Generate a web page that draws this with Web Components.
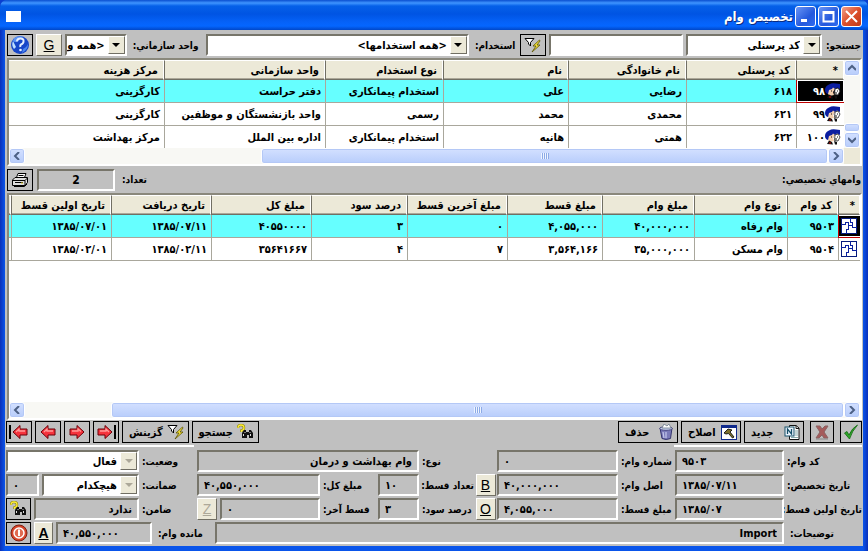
<!DOCTYPE html>
<html lang="fa" dir="rtl">
<head>
<meta charset="utf-8">
<title>تخصیص وام</title>
<style>
  body { margin: 0; background: #0a3fd0; font: bold 11px "DejaVu Sans Condensed", "DejaVu Sans", sans-serif; color: #000; }
  loan-app { min-height: 100vh; }
</style>
</head>
<body>
<loan-app></loan-app>

<script>
const define = (name, html, setup) => {
  const template = document.createElement('template');
  template.innerHTML = '<style>*{box-sizing:border-box}:host{box-sizing:border-box}</style>' + html;
  customElements.define(name, class extends HTMLElement {
    constructor() {
      super();
      this.attachShadow({ mode: 'open' }).append(template.content.cloneNode(true));
    }
    connectedCallback() {
      if (setup && !this.ready) { this.ready = true; setup(this, this.shadowRoot); }
    }
  });
};

const ARROW = 'M1 8 8 1.5V5H15V11H8V14.5Z';
const ICONS = {
  help: [20, 20, `<circle cx="10" cy="10" r="9" fill="#1746c8"/><path d="M4 3Q9 0 14 2Q9 3 8 6Q5 8 3 6Z" fill="#5b94f4"/><path d="M3 6Q1 10 4 14L6 12Z" fill="#bfe0ff"/><path d="M13 14Q17 12 18 9Q18 15 12 18Z" fill="#4a86f0"/><path d="M7 6.500Q7 3.500 10.500 3.500T13.500 6.500Q13.500 8.500 11 9.500Q10 10 10.300 12" fill="none" stroke="#e4efff" stroke-width="2"/><circle cx="10.500" cy="15" r="1.300" fill="#e4efff"/>`],
  filter: [18, 16, `<path d="M1 1.500H10L6.500 5.500V9L4.500 7V5.500Z" fill="#fff" stroke="#000"/><path d="M15.500 3 9 9h3l-4 6 8-7h-3l3-4z" fill="#f6e33a" stroke="#5a5200" stroke-width=".8"/>`],
  print: [18, 16, `<path d="M5.500 5.500 7 1.500H15L13.500 5.500" fill="#fff" stroke="#000"/><path d="M7.500 3.500H12.500" stroke="#000"/><path d="M1.500 8 4 5.500H16.500V10.500L14 13.500H1.500Z" fill="#ddd" stroke="#000"/><path d="M1.500 8.500H14V13M14 8.500 16.500 6M3 14.500H13.500L16 12M4 10.500H12" fill="none" stroke="#000"/><path d="M10 11h2" stroke="#e2cc20"/>`],
  people: [16, 16, `<path d="M0 7Q0 3 4 1.500Q7-.5 11 .5L15 1V6L12 4.500 9 7 7 11H3Q0 10 0 7Z" fill="#0b1da0"/><path d="M4 7 7 6 8 4.500 10 6 8 9 9 12 5 13 3 11Z" fill="#f3cfae"/><path d="M10 6 13 5 15 8 13 12 9.500 11.500Z" fill="#fff" stroke="#222" stroke-width=".8"/><path d="M2 15 4 11.500 7 13 8 15.500ZM9 12 12 13V15.500H10Z" fill="#111"/><path d="M6 8h1M12 8h1M10 10h2" stroke="#111"/><path d="M4 14h2" stroke="#c00"/>`],
  piece: [16, 16, `<g shape-rendering="crispEdges"><rect x="0" y="0" width="16" height="16" fill="#061a7c"/><rect x="1" y="1" width="14" height="14" fill="#fff"/><path d="M0 6.500H4.500V4.500H7.500V7.500H11.500V9.500H16M9.500 0V4.500H11.500V7.500M7.500 7.500V11.500H5.500V16M4.500 11.500H7.500" fill="none" stroke="#0a20a0" stroke-width="1"/></g>`],
  prev: [16, 16, `<path d="${ARROW}" fill="#f5333c" stroke="#6b0008"/><path d="M4 8 7 5V7H13" fill="none" stroke="#ff9a98" stroke-width="1.300"/>`],
  next: [16, 16, `<g transform="matrix(-1 0 0 1 16 0)"><path d="${ARROW}" fill="#f5333c" stroke="#6b0008"/><path d="M4 7.500 7 5V7H13" fill="none" stroke="#ff9a98" stroke-width="1.300"/></g>`],
  first: [20, 16, `<path d="M1 1V15" stroke="#000" stroke-width="2"/><g transform="translate(3 0)"><path d="${ARROW}" fill="#f5333c" stroke="#6b0008"/><path d="M4 8 7 5V7H13" fill="none" stroke="#ff9a98" stroke-width="1.300"/></g>`],
  last: [20, 16, `<path d="M19 1V15" stroke="#000" stroke-width="2"/><g transform="matrix(-1 0 0 1 17 0)"><path d="${ARROW}" fill="#f5333c" stroke="#6b0008"/><path d="M4 8 7 5V7H13" fill="none" stroke="#ff9a98" stroke-width="1.300"/></g>`],
  find: [18, 16, `<path d="M1 4Q1 1 4 1T7 4Q7 6 4.500 6.500V8" fill="none" stroke="#8a8200" stroke-width="2.400"/><path d="M1 4Q1 1 4 1T7 4Q7 6 4.500 6.500V8" fill="none" stroke="#ffee3a" stroke-width="1.300"/><path d="M5 14V9L7 6H9V8H12V6H14L16 9V14H12V11H10V14Z" fill="#111"/><path d="M6.500 12V10M13.500 12V10M8 8v1M13 8v1" stroke="#ddd"/>`],
  trash: [16, 16, `<path d="M2 4H14L12.500 14.500Q8 16.500 4 14.500Z" fill="#7a7ab8" stroke="#34346e"/><ellipse cx="8" cy="4.500" rx="6.300" ry="1.800" fill="#c6d0ea" stroke="#34346e" stroke-width=".8"/><path d="M4 4 6 0 9 2 11 0 13 4Z" fill="#fff" stroke="#6b7a8c" stroke-width=".8"/><path d="M5 8 6 14M8 8V14" stroke="#c4c8ec" stroke-width="1.200"/>`],
  edit: [16, 15, `<rect x=".5" y=".5" width="15" height="14" fill="#fff" stroke="#102a8c"/><path d="M1 1H15V3H1Z" fill="#102a8c"/><path d="M3 8 7 4 11 5 9 7 13 12 11.500 13 7.500 8.500 5 9Z" fill="#7c6f2a" stroke="#111" stroke-width=".9"/>`],
  fresh: [16, 16, `<path d="M5.500 1.500H12L15 4V15.500H5.500Z" fill="#fff" stroke="#111"/><path d="M12 1.500V4.500H15" fill="none" stroke="#111"/><rect x="1" y="3" width="9" height="9" fill="#eef6ff" stroke="#165069"/><path d="M3.500 10V5L7.500 10V5" fill="none" stroke="#165069" stroke-width="1.300"/><path d="M11 7h3M11 9h3M11 11h3M7 13.500h7" stroke="#8aa"/>`],
  cross: [16, 16, `<path d="M2 2H6L8 5 11 2H14L10 8 14 14H10L8 11 5 14H2L6 8Z" fill="#a65b5b" stroke="#8a6262"/><path d="M2 15H14" stroke="#888"/>`],
  check: [16, 16, `<path d="M1.500 9 4 7.500 6 11Q9 4 14.500 1Q9 7 6.500 15Z" fill="#2fa52a" stroke="#12690f" stroke-width=".8"/>`],
  power: [18, 18, `<circle cx="9" cy="9" r="8" fill="#d8452b" stroke="#7d2012"/><circle cx="9" cy="9" r="5" fill="#e06a50" stroke="#fff" stroke-width="1.500"/><path d="M9 5.500V12" stroke="#fff" stroke-width="2"/>`]
};

define('xp-icon', `<style>:host{display:block;flex:none}svg{display:block}</style>`, (el, root) => {
  const [w, h, body] = ICONS[el.getAttribute('name')];
  root.innerHTML += `<svg width="${w}" height="${h}" viewBox="0 0 ${w} ${h}" aria-hidden="true">${body}</svg>`;
});

/* Flat black-framed button; kind="key" is the raised one-letter kind */
define('tool-button', `<style>
  :host{display:block;flex:none;width:26px;height:22px}
  button{width:100%;height:100%;padding:0;display:flex;align-items:center;justify-content:center;gap:4px;
    font:inherit;color:inherit;background:#c0c0c0;border:1px solid #000;white-space:nowrap}
  :host([wide]) button{justify-content:space-between;padding:0 3px 0 6px}
  :host([kind=key]) button{background:#ece9d8;border:1px solid;border-color:#fff #716f64 #716f64 #fff;
    font:14px "Liberation Sans",sans-serif;text-decoration:underline}
  :host([strong]) button{font-weight:bold}
  :host([off]) button{color:#aca899}
</style><button type="button"><slot></slot></button>`, (el, root) => {
  const b = root.querySelector('button');
  if (el.hasAttribute('off')) b.disabled = true;
  if (el.title) b.setAttribute('aria-label', el.title);
});

/* Label with a text box or a drop-down */
define('xp-field', `<style>
  :host{display:contents}
  label{align-self:center;font-size:10px;white-space:nowrap;text-align:left;padding-inline-end:3px}
  .box{display:grid;height:22px;min-width:0;border:2px solid;border-color:#77756a #fff #fff #77756a;background:#c0c0c0;flex:var(--flex,1 1 0)}
  .box.white{background:#fff}
  .box>*{grid-area:1/1;min-width:0}
  input,select{width:100%;height:100%;border:0;margin:0;padding:0 5px;background:none;font:inherit;color:#000;outline:0;appearance:none;text-align:right}
  select{padding-inline-start:20px;padding-inline-end:0;opacity:1}
  input.num{direction:ltr;text-align:left}
  input.mid{text-align:center;font-size:12px}
  .drop{justify-self:start;width:17px;background:#ece9d8;border:1px solid;border-color:#fff #716f64 #716f64 #fff;
    display:grid;place-items:center;pointer-events:none}
  .drop::after{content:"";border:4px solid transparent;border-top-color:#000;border-bottom:0}
  .off .drop::after{border-top-color:#aca899}
</style>`, (el, root) => {
  const a = n => el.getAttribute(n);
  const label = document.createElement('label');
  label.textContent = a('label');
  label.htmlFor = 'c';
  const box = document.createElement('div');
  box.className = 'box';
  box.part = 'box';
  label.part = 'label';
  let c;
  if (el.hasAttribute('drop')) {
    c = document.createElement('select');
    c.add(new Option(a('value')));
    box.classList.add('white');
    box.classList.toggle('off', el.hasAttribute('off'));
    box.append(c, Object.assign(document.createElement('span'), { className: 'drop' }));
  } else {
    c = document.createElement('input');
    c.value = a('value') || '';
    c.readOnly = !el.hasAttribute('editable');
    if (!c.readOnly) box.classList.add('white');
    c.className = a('align') || '';
    box.append(c);
  }
  c.id = 'c';
  if (a('label')) root.append(label); else c.setAttribute('aria-label', a('hint'));
  root.append(box);
});

define('scroll-bar', `<style>
  :host{display:flex;direction:ltr;height:16px;background:#f8f8f4;flex:none}
  :host([vertical]){flex-direction:column;width:16px;height:auto}
  button,.thumb{background:linear-gradient(#d3e0ff,#b8cdfb);border:1px solid #fff;border-radius:3px;box-shadow:inset 0 0 0 1px #b4c8f6;padding:0}
  button{width:16px;height:16px;display:grid;place-items:center;flex:none}
  .thumb{display:flex;align-items:center;justify-content:center;gap:1px;min-width:0;min-height:0}
  i{width:1px;height:6px;background:#eef4ff;box-shadow:1px 0 #8caae6}
  :host([vertical]) i{display:none}
</style>
<button type="button"><svg width="8" height="8"><path fill="none" stroke="#4d6185" stroke-width="2"/></svg></button>
<span class="a"></span><div class="thumb"><i></i><i></i><i></i><i></i></div><span class="b"></span>
<button type="button"><svg width="8" height="8"><path fill="none" stroke="#4d6185" stroke-width="2"/></svg></button>`, (el, root) => {
  const v = el.hasAttribute('vertical');
  const [a, t] = el.getAttribute('split').split(' ');
  root.querySelector('.a').style.flex = a + ' 1 0';
  root.querySelector('.thumb').style.flex = t + ' 1 0';
  const p = root.querySelectorAll('path'), b = root.querySelectorAll('button');
  p[0].setAttribute('d', v ? 'M0 6 4 2 8 6' : 'M6 0 2 4 6 8');
  p[1].setAttribute('d', v ? 'M0 2 4 6 8 2' : 'M2 0 6 4 2 8');
  b[0].setAttribute('aria-label', v ? 'بالا' : 'چپ');
  b[1].setAttribute('aria-label', v ? 'پایین' : 'راست');
});

/* Grid: columns and rows come from GRIDS by its name */
const GRIDS = {
  staff: {
    widths: [48, 110, 118, 125, 118, 161, 155], icon: 'people',
    head: ['*', 'کد پرسنلی', 'نام خانوادگی', 'نام', 'نوع استخدام', 'واحد سازمانی', 'مرکز هزینه'],
    rows: [
      ['۹۸', '۶۱۸', 'رضایی', 'علی', 'استخدام پیمانکاری', 'دفتر حراست', 'کارگزینی'],
      ['۹۹', '۶۲۱', 'محمدی', 'محمد', 'رسمی', 'واحد بازنشستگان و موظفین', 'کارگزینی'],
      ['۱۰۰', '۶۲۲', 'همتی', 'هانیه', 'استخدام پیمانکاری', 'اداره بین الملل', 'مرکز بهداشت']
    ]
  },
  loans: {
    widths: [22, 51, 93, 92, 95, 100, 96, 100, 100, 100, 3], icon: 'piece',
    head: ['*', 'کد وام', 'نوع وام', 'مبلغ وام', 'مبلغ قسط', 'مبلغ آخرین قسط', 'درصد سود', 'مبلغ کل', 'تاریخ دریافت', 'تاریخ اولین قسط', ''],
    rows: [
      ['', '۹۵۰۳', 'وام رفاه', '۴۰,۰۰۰,۰۰۰', '۴,۰۵۵,۰۰۰', '۰', '۳', '۴۰۵۵۰۰۰۰', '۱۳۸۵/۰۷/۱۱', '۱۳۸۵/۰۷/۰۱', ''],
      ['', '۹۵۰۴', 'وام مسکن', '۳۵,۰۰۰,۰۰۰', '۳,۵۶۴,۱۶۶', '۷', '۴', '۳۵۶۴۱۶۶۷', '۱۳۸۵/۰۲/۱۱', '۱۳۸۵/۰۲/۰۱', '']
    ]
  }
};
define('data-grid', `<style>
  :host{display:flex;border:2px solid;border-color:#8a887c #fff #fff #8a887c;background:#fff;min-width:0}
  .side{display:flex;flex-direction:column;background:#ece9d8}
  .side scroll-bar{flex:1}
  .side i{height:16px}
  .main{flex:1;min-width:0;display:flex;flex-direction:column}
  .view{flex:1;overflow:hidden}
  :host([name=staff]) .view{flex:none;height:88px}
  table{width:100%;table-layout:fixed;border-collapse:separate;border-spacing:0}
  th,td{padding:0;text-align:right;white-space:nowrap;overflow:hidden;font:inherit}
  th{height:20px;padding-inline-start:5px;background:#ece9d8;border:1px solid;border-color:#fff #fff #716f64 #716f64;box-shadow:inset 0 -1px #aca899}
  td{height:23px;padding-inline-start:4px;border:solid #a9a79c;border-width:0 0 1px 1px}
  tr.on td{background:#6ff}
  td:last-child,th:last-child{border-left:0}
  td:first-child{padding:1px}
  tr.on td:first-child{background:#fff;border-color:#c00000}
  .mark{display:flex;align-items:center;height:20px;padding-inline-start:2px}
  tr.on .mark{background:#000;color:#fff}
  :host([name=loans]) td:first-child{padding:0}
  :host([name=loans]) .mark{padding-inline-start:3px}
  :host([name=loans]) th:first-child{padding-inline-start:4px}
</style><div class="side"></div>
<div class="main"><div class="view"><table><colgroup></colgroup><thead><tr></tr></thead><tbody></tbody></table></div></div>`, (el, root) => {
  const g = GRIDS[el.getAttribute('name')], $ = s => root.querySelector(s);
  $('.main').insertAdjacentHTML('beforeend', `<scroll-bar split="${el.getAttribute('split')}"></scroll-bar>`);
  if (el.hasAttribute('tall')) $('.side').innerHTML = '<scroll-bar vertical split="40 6"></scroll-bar><i></i>';
  else $('.side').remove();
  $('colgroup').innerHTML = g.widths.map(w => `<col style="width:${w}px">`).join('');
  $('thead tr').innerHTML = g.head.map(t => `<th scope="col">${t}</th>`).join('');
  $('tbody').innerHTML = g.rows.map((r, i) => `<tr${i ? '' : ' class="on"'}>` + r.map((t, j) =>
    j ? `<td>${t}</td>` : `<td><div class="mark"><xp-icon name="${g.icon}"></xp-icon>${t}</div></td>`).join('') + '</tr>').join('');
});

define('title-bar', `<style>
  :host{display:flex;align-items:center;height:30px;padding:3px 6px 0;gap:2px;
    background:linear-gradient(#0a4fd0,#3f95ff 3px,#0560e8 6px,#0054e3 14px,#0562f8 22px,#0466ff 26px,#0047c8)}
  h1{flex:1;margin:0;font-size:13px;color:#fff;text-shadow:1px 1px #0a2a80}
  button{width:21px;height:21px;padding:0;border:1px solid #fff;border-radius:3px;background:linear-gradient(135deg,#6a95f5,#2458dc 60%,#2e6bf0);display:grid;place-items:center}
  .close{background:linear-gradient(135deg,#f0a08a,#dd4f2b 50%,#c03a18)}
  svg{display:block;fill:none;stroke:#fff;stroke-width:2}
  span{width:15px;height:11px;background:#fff}
</style>
<button type="button" class="close" aria-label="بستن"><svg width="13" height="13"><path d="M1 1 12 12M12 1 1 12"/></svg></button>
<button type="button" aria-label="بزرگ"><svg width="13" height="13"><path d="M1.500 2H11.500V11.500H1.500Z"/><path d="M1 2.500H12" stroke-width="3"/></svg></button>
<button type="button" aria-label="کوچک"><svg width="13" height="13"><path d="M2 10.500H8" stroke-width="3"/></svg></button>
<h1><slot></slot></h1><span></span>`);

define('search-bar', `<style>
  :host{display:flex;align-items:center;padding:4px 2px 2px;gap:3px}
  xp-field::part(label){flex:none;width:var(--lw)}
  .a{--flex:138 1 0;--lw:36px}.b{--flex:135 1 0}.c{--flex:270 1 0;--lw:45px}.d{--flex:60 1 0;--lw:73px}
</style>
<xp-field class="a" drop label="جستجو:" value="کد پرسنلی"></xp-field>
<xp-field class="b" editable hint="عبارت جستجو"></xp-field>
<tool-button title="فیلتر"><xp-icon name="filter"></xp-icon></tool-button>
<xp-field class="c" drop label="استخدام:" value="&lt;همه استخدامها&gt;"></xp-field>
<xp-field class="d" drop label="واحد سازماني:" value="&lt;همه و"></xp-field>
<tool-button kind="key">G</tool-button>
<tool-button title="راهنما"><xp-icon name="help"></xp-icon></tool-button>`);

define('count-bar', `<style>
  :host{display:flex;align-items:center;height:27px;padding:0 2px;gap:4px}
  span{flex:1;font-size:10px}
  xp-field{--flex:none}
  xp-field::part(box){width:78px}
</style>
<span>وامهاي تخصيصي:</span>
<xp-field label="تعداد:" align="mid" value="2"></xp-field>
<tool-button title="چاپ"><xp-icon name="print"></xp-icon></tool-button>`);

define('record-bar', `<style>
  :host{display:flex;align-items:flex-start;height:25px;padding:1px 1px 0;gap:3px}
  .gap{flex:1}
  .w{width:60px}.f{width:67px}
  .ok{width:22px;margin-inline-end:3px}
  .no{width:24px;margin-inline-end:3px}
</style>
<tool-button class="ok" title="تایید"><xp-icon name="check"></xp-icon></tool-button>
<tool-button class="no" title="لغو"><xp-icon name="cross"></xp-icon></tool-button>
<tool-button wide class="w"><xp-icon name="fresh"></xp-icon>جدید</tool-button>
<tool-button wide class="w"><xp-icon name="edit"></xp-icon>اصلاح</tool-button>
<tool-button wide class="w"><xp-icon name="trash"></xp-icon>حذف</tool-button>
<span class="gap"></span>
<tool-button wide class="f"><xp-icon name="find"></xp-icon>جستجو</tool-button>
<tool-button wide class="f"><xp-icon name="filter"></xp-icon>گزینش</tool-button>
<tool-button title="آخرین"><xp-icon name="last"></xp-icon></tool-button>
<tool-button title="بعدی"><xp-icon name="next"></xp-icon></tool-button>
<tool-button title="قبلی"><xp-icon name="prev"></xp-icon></tool-button>
<tool-button title="اولین"><xp-icon name="first"></xp-icon></tool-button>`);

define('loan-form', `<style>
  :host{display:block;padding:0 1px 2px}
  .edge{display:flex;justify-content:space-between;height:5px}
  .edge i{width:22%;height:2px;background:#fff}
  .rows{display:grid;gap:2px 0;grid-template-columns:78px 109fr 57px 121fr 23px 55px 41fr 58px 123fr 58px 133fr}
  .type::part(box){grid-column:span 3}
  .last{display:flex;gap:3px;margin-top:2px}
  .note::part(label){width:75px}
  .rest{--flex:0 0 96px}
  .rest::part(label){width:57px}
  .key{width:20px;justify-self:center}
  .last .key{width:19px}
  .ico{width:25px}
</style>
<div class="edge"><i></i><i></i></div>
<div class="rows">
  <xp-field label="کد وام:" align="num" value="۹۵۰۳"></xp-field>
  <xp-field label="شماره وام:" align="num" value="۰"></xp-field>
  <span></span>
  <xp-field class="type" label="نوع:" value="وام بهداشت و درمان"></xp-field>
  <xp-field label="وضعیت:" drop off value="فعال"></xp-field>

  <xp-field label="تاریخ تخصیص:" align="num" value="۱۳۸۵/۰۷/۱۱"></xp-field>
  <xp-field label="اصل وام:" align="num" value="۴۰,۰۰۰,۰۰۰"></xp-field>
  <tool-button class="key" kind="key">B</tool-button>
  <xp-field label="تعداد قسط:" align="num" value="۱۰"></xp-field>
  <xp-field label="مبلغ کل:" align="num" value="۴۰,۵۵۰,۰۰۰"></xp-field>
  <xp-field class="bond" label="ضمانت:" drop off value="هیچکدام"></xp-field>

  <xp-field label="تاریخ اولین قسط:" align="num" value="۱۳۸۵/۰۷"></xp-field>
  <xp-field label="مبلغ قسط:" align="num" value="۴,۰۵۵,۰۰۰"></xp-field>
  <tool-button class="key" kind="key">O</tool-button>
  <xp-field label="درصد سود:" align="num" value="۳"></xp-field>
  <xp-field class="endpay" label="قسط آخر:" align="num" value="۰"></xp-field>
  <xp-field class="surety" label="ضامن:" value="ندارد"></xp-field>
</div>
<div class="last">
  <xp-field class="note" label="توضیحات:" value="Import"></xp-field>
  <xp-field class="rest" label="مانده وام:" align="num" value="۴۰,۵۵۰,۰۰۰"></xp-field>
  <tool-button class="key" kind="key" strong>A</tool-button>
  <tool-button class="ico" title="خروج"><xp-icon name="power"></xp-icon></tool-button>
</div>`, (el, root) => {
  /* Fields that share their grid cell with a neighbour */
  const share = (cls, html) => {
    const box = root.querySelector(cls).shadowRoot.querySelector('.box');
    const pair = document.createElement('div');
    pair.style.cssText = 'display:flex;gap:3px;min-width:0';
    box.before(pair);
    pair.append(box);
    pair.insertAdjacentHTML('beforeend', html);
  };
  share('.bond', '<xp-field style="--flex:0 0 33px" hint="تعداد ضمانت" align="num" value="۰"></xp-field>');
  share('.endpay', '<tool-button kind="key" off style="width:20px">Z</tool-button>');
  share('.surety', '<tool-button title="جستجوی ضامن" style="width:25px"><xp-icon name="find"></xp-icon></tool-button>');
});

define('loan-app', `<style>
  :host{display:flex;flex-direction:column;border-radius:7px 7px 0 0;overflow:hidden;background:linear-gradient(90deg,#0a2fb8,#0a55ea 5px,#0a55ea calc(100% - 5px),#0a2fb8)}
  main{flex:1;display:flex;flex-direction:column;margin:0 5px 5px;background:#c0c0c0}
  data-grid{margin:0 1px 0 2px}
  .loans{flex:1}
</style>
<title-bar>تخصیص وام</title-bar>
<main>
  <search-bar></search-bar>
  <data-grid name="staff" tall split="236 565"></data-grid>
  <count-bar></count-bar>
  <data-grid name="loans" class="loans" split="86 732"></data-grid>
  <record-bar></record-bar>
  <loan-form></loan-form>
</main>`);
</script>
</body>
</html>
